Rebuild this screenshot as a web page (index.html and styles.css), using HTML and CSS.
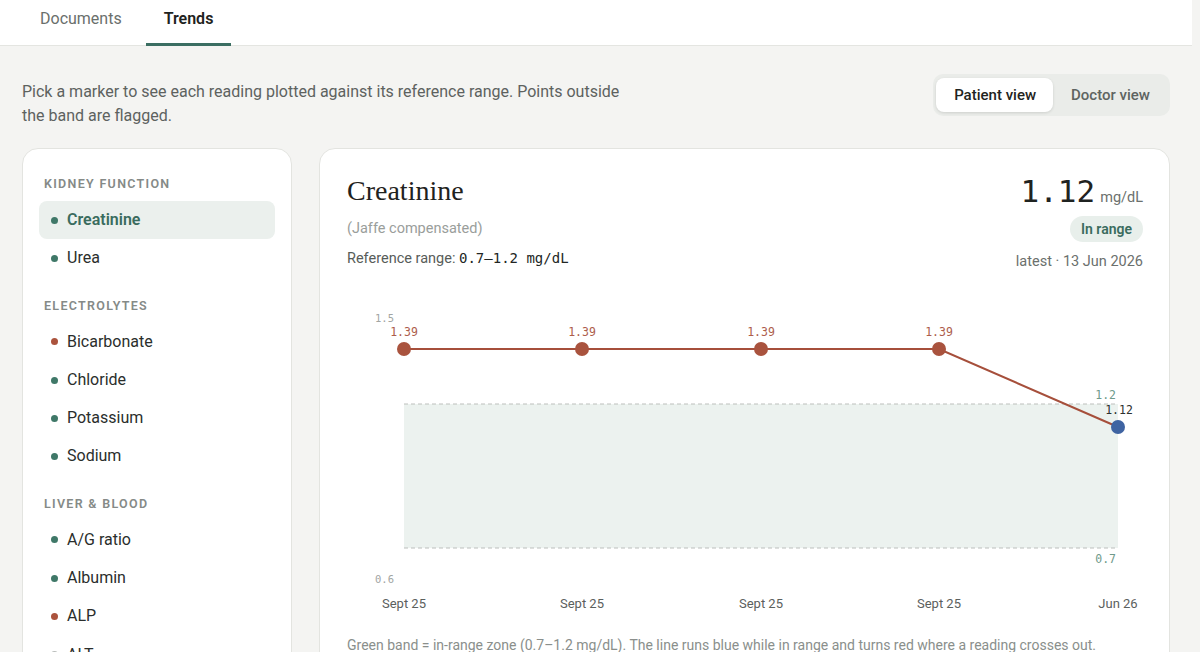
FILE: index.html
```html
<!DOCTYPE html>
<html lang="en">
<head>
  <meta charset="UTF-8">
  <title>Lab results – Trends</title>
  <link rel="stylesheet" href="styles.css">
</head>
<body>
<div class="app">

  <!-- Tabs -->
  <header class="tabs">
    <a class="tab">Documents</a>
    <a class="tab active">Trends</a>
  </header>

  <main class="page">
    <div class="topline">
      <p class="intro">Pick a marker to see each reading plotted against its reference range. Points outside the band are flagged.</p>
      <div class="toggle">
        <button class="toggle-btn on">Patient view</button>
        <button class="toggle-btn">Doctor view</button>
      </div>
    </div>

    <div class="layout">
      <!-- Marker list -->
      <aside class="markers">
        <div class="group-label">Kidney function</div>
        <div class="marker selected"><span class="dot ok"></span>Creatinine</div>
        <div class="marker"><span class="dot ok"></span>Urea</div>

        <div class="group-label">Electrolytes</div>
        <div class="marker"><span class="dot out"></span>Bicarbonate</div>
        <div class="marker"><span class="dot ok"></span>Chloride</div>
        <div class="marker"><span class="dot ok"></span>Potassium</div>
        <div class="marker"><span class="dot ok"></span>Sodium</div>

        <div class="group-label">Liver &amp; blood</div>
        <div class="marker"><span class="dot ok"></span>A/G ratio</div>
        <div class="marker"><span class="dot ok"></span>Albumin</div>
        <div class="marker"><span class="dot out"></span>ALP</div>
        <div class="marker"><span class="dot none"></span>ALT</div>
        <div class="marker"><span class="dot ok"></span>AST</div>
      </aside>

      <!-- Chart card -->
      <section class="chart-card">
        <div class="chart-head">
          <div>
            <h2 class="marker-name">Creatinine</h2>
            <div class="method">(Jaffe compensated)</div>
            <div class="ref">Reference range: <span class="mono">0.7–1.2 mg/dL</span></div>
          </div>
          <div class="latest">
            <div class="value"><span class="num">1.12</span><span class="unit">mg/dL</span></div>
            <span class="pill">In range</span>
            <div class="date">latest · 13 Jun 2026</div>
          </div>
        </div>

        <svg class="chart" viewBox="0 0 793 330" width="793" height="330">
          <!-- reference band 0.7–1.2 -->
          <rect x="57" y="114" width="714" height="144" fill="#ecf2ef"/>
          <line x1="57" y1="114" x2="771" y2="114" stroke="#bcbfbc" stroke-dasharray="4 3"/>
          <line x1="57" y1="258" x2="771" y2="258" stroke="#bcbfbc" stroke-dasharray="4 3"/>
          <text class="band-lbl" x="769" y="109" text-anchor="end">1.2</text>
          <text class="band-lbl" x="769" y="273" text-anchor="end">0.7</text>

          <!-- axis extremes -->
          <text class="axis-lbl" x="28" y="32">1.5</text>
          <text class="axis-lbl" x="28" y="293">0.6</text>

          <!-- readings -->
          <polyline points="57,59 235,59 414,59 592,59 771,137" fill="none" stroke="#a64f3b" stroke-width="2"/>
          <circle cx="57" cy="59" r="7" fill="#a9533e"/>
          <circle cx="235" cy="59" r="7" fill="#a9533e"/>
          <circle cx="414" cy="59" r="7" fill="#a9533e"/>
          <circle cx="592" cy="59" r="7" fill="#a9533e"/>
          <circle cx="771" cy="137" r="7" fill="#3f64a2"/>

          <text class="pt-lbl out" x="57" y="46" text-anchor="middle">1.39</text>
          <text class="pt-lbl out" x="235" y="46" text-anchor="middle">1.39</text>
          <text class="pt-lbl out" x="414" y="46" text-anchor="middle">1.39</text>
          <text class="pt-lbl out" x="592" y="46" text-anchor="middle">1.39</text>
          <text class="pt-lbl" x="772" y="124" text-anchor="middle">1.12</text>

          <text class="date-lbl" x="57" y="318" text-anchor="middle">Sept 25</text>
          <text class="date-lbl" x="235" y="318" text-anchor="middle">Sept 25</text>
          <text class="date-lbl" x="414" y="318" text-anchor="middle">Sept 25</text>
          <text class="date-lbl" x="592" y="318" text-anchor="middle">Sept 25</text>
          <text class="date-lbl" x="771" y="318" text-anchor="middle">Jun 26</text>
        </svg>

        <p class="caption">Green band = in-range zone (0.7–1.2 mg/dL). The line runs blue while in range and turns red where a reading crosses out.</p>
      </section>
    </div>
  </main>

</div>
</body>
</html>
```

FILE: styles.css
```css
body {
  margin: 0;
  font-family: Roboto, "Liberation Sans", sans-serif;
  background-color: #f4f4f2;
  color: #222624;
}

.app {
  margin-right: 8px;
}

/* Tabs */
.tabs {
  display: flex;
  gap: 6px;
  height: 45px;
  padding-left: 22px;
  background: #fff;
  border-bottom: 1px solid #e4e5e1;
}

.tab {
  padding: 0 18px;
  line-height: 37px;
  font-size: 16px;
  color: #6a6f6c;
  border-bottom: 3px solid transparent;
  margin-bottom: -1px;
}

.tab.active {
  color: #1e2220;
  font-weight: 600;
  border-bottom-color: #3b6e62;
}

.page {
  padding: 28px 22px 0 22px;
  height: 578px;
  overflow: hidden;
}

.topline {
  display: flex;
  justify-content: space-between;
  align-items: flex-start;
}

.intro {
  margin: 6px 0 0 0;
  max-width: 620px;
  font-size: 16px;
  line-height: 24px;
  color: #5d625f;
}

.toggle {
  display: flex;
  padding: 4px 3px;
  background: #eaece9;
  border-radius: 10px;
}

.toggle-btn {
  border: none;
  background: none;
  font-family: inherit;
  font-size: 15px;
  font-weight: 500;
  color: #5e6461;
  height: 34px;
  padding: 0 17px 0 18px;
  border-radius: 8px;
}

.toggle-btn.on {
  background: #fff;
  color: #1f2421;
  box-shadow: 0 1px 3px rgba(0,0,0,0.12);
}

.layout {
  display: flex;
  gap: 27px;
  margin-top: 20px;
  align-items: flex-start;
}

/* Marker list */
.markers {
  width: 236px;
  flex: none;
  background: #fff;
  border: 1px solid #e3e4e0;
  border-radius: 16px;
  padding: 27px 16px;
  height: 600px;
}

.group-label {
  padding-left: 5px;
  margin: 20px 0 9px 0;
  font-size: 12.5px;
  line-height: 16px;
  font-weight: 600;
  letter-spacing: 1.3px;
  text-transform: uppercase;
  color: #858a87;
}

.group-label:first-child {
  margin-top: 0;
}

.marker {
  display: flex;
  align-items: center;
  gap: 9px;
  padding: 8px 12px;
  line-height: 22.3px;
  font-size: 16px;
  color: #2a2e2c;
  border-radius: 8px;
}

.marker.selected {
  background: #ebf0ed;
  color: #3a6c5e;
  font-weight: 600;
}

.dot {
  width: 7px;
  height: 7px;
  border-radius: 50%;
  flex: none;
}

.dot.ok { background: #3f7868; }
.dot.out { background: #ab533d; }
.dot.none { background: #b9bcba; }

/* Chart card */
.chart-card {
  flex: 1;
  background: #fff;
  border: 1px solid #e3e4e0;
  border-radius: 16px;
  padding: 22px 27px;
  height: 600px;
}

.chart-head {
  display: flex;
  justify-content: space-between;
}

.marker-name {
  margin: 0;
  font-family: "Liberation Serif", "DejaVu Serif", serif;
  font-size: 28px;
  font-weight: normal;
  line-height: 40px;
  color: #1f2220;
}

.method {
  margin-top: 9px;
  font-size: 14.5px;
  color: #9a9e9b;
}

.ref {
  margin-top: 13px;
  font-size: 14.5px;
  color: #575c59;
}

.mono {
  font-family: "DejaVu Sans Mono", monospace;
  font-size: 14px;
  color: #222624;
}

.latest {
  display: flex;
  flex-direction: column;
  align-items: flex-end;
  margin-right: -1px;
}

.value {
  display: flex;
  align-items: baseline;
  gap: 5px;
}

.num {
  font-family: "DejaVu Sans Mono", monospace;
  font-size: 31px;
  line-height: 40px;
  color: #1f2321;
}

.unit {
  font-size: 14.5px;
  color: #6b706d;
}

.pill {
  margin-top: 5px;
  padding: 0 11px;
  line-height: 26px;
  border-radius: 13px;
  background: #e8efeb;
  color: #3a6c5e;
  font-size: 14px;
  font-weight: 600;
}

.date {
  margin-top: 11px;
  font-size: 14.5px;
  color: #6b706d;
}

.chart {
  display: block;
  margin-top: 20px;
}

.chart text {
  font-family: "DejaVu Sans Mono", monospace;
  font-size: 11.5px;
}

.chart .axis-lbl { fill: #a2a5a3; font-size: 10.5px; }
.chart .band-lbl { fill: #6f9a8b; }
.chart .pt-lbl { fill: #2c302e; }
.chart .pt-lbl.out { fill: #ad5d4b; }

.chart .date-lbl {
  font-family: Roboto, "Liberation Sans", sans-serif;
  font-size: 13px;
  fill: #5b605d;
}

.caption {
  margin: 17px 0 0 0;
  font-size: 14px;
  color: #8a8f8c;
}
```
